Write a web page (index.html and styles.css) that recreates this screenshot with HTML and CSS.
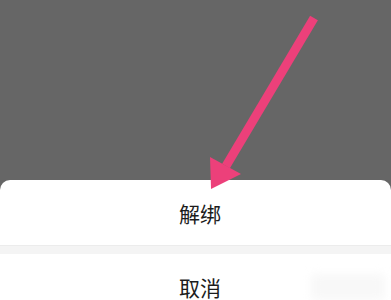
FILE: index.html
```html
<!DOCTYPE html>
<html lang="zh-CN">
<head>
    <meta charset="UTF-8">
    <meta name="viewport" content="width=device-width, initial-scale=1.0">
    <title>解绑</title>
    <link rel="stylesheet" href="styles.css">
</head>
<body>
    <div class="screen">
        <div class="mask"></div>
        <div class="sheet">
            <div class="sheet-item">解绑</div>
            <div class="sheet-gap"></div>
            <div class="sheet-item">取消</div>
        </div>
        <svg class="arrow" width="391" height="300" viewBox="0 0 391 300">
            <line x1="314" y1="18" x2="226" y2="166" stroke="#ec407a" stroke-width="9"/>
            <polygon points="210,157 241,174 211,189" fill="#ec407a"/>
        </svg>
        <div class="watermark"></div>
    </div>
</body>
</html>
```

FILE: styles.css
```css
body {
    margin: 0;
    font-family: "Noto Sans CJK SC", "Noto Sans", sans-serif;
    background-color: #666666;
}

.screen {
    position: relative;
    width: 391px;
    height: 300px;
    overflow: hidden;
    display: flex;
    flex-direction: column;
}

.mask {
    height: 180px;
    flex-shrink: 0;
    background-color: #666666;
}

.sheet {
    flex: 1;
    background-color: #fff;
    border-radius: 10px 10px 0 0;
    display: flex;
    flex-direction: column;
}

.sheet-item {
    height: 65px;
    display: flex;
    align-items: center;
    justify-content: center;
    padding-left: 9px;
    font-size: 21px;
    color: #1c1c1c;
}

.sheet-gap {
    height: 8px;
    background-color: #f4f4f4;
    border-top: 1px solid #ececec;
}

.arrow {
    position: absolute;
    left: 0;
    top: 0;
}

.watermark {
    position: absolute;
    right: 6px;
    bottom: 0;
    width: 74px;
    height: 26px;
    background-color: #f8f8f8;
    border-radius: 4px;
    filter: blur(4px);
}
```
